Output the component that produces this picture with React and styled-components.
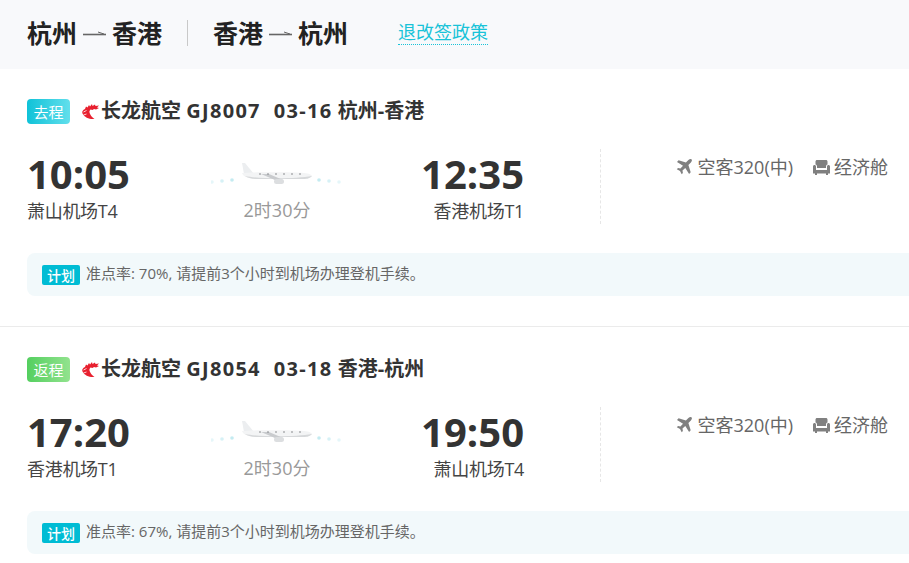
import React from "react";
import styled, { createGlobalStyle } from "styled-components";

const FONT = `"Open Sans", "Noto Sans CJK SC", sans-serif`;

const GlobalStyle = createGlobalStyle`
    html, body {
        margin: 0;
        padding: 0;
        background: #fff;
        overflow: hidden;
    }
    body {
        font-family: ${FONT};
        color: #333;
    }
`;

const Page = styled.div`
    width: 909px;
    height: 563px;
    overflow: hidden;
`;

const Header = styled.div`
    height: 69px;
    box-sizing: border-box;
    padding: 0 0 4px 27px;
    display: flex;
    align-items: center;
    background: #f8f9fb;
`;

const Route = styled.div`
    display: flex;
    align-items: center;
    gap: 6px;
    font-size: 25px;
    font-weight: 700;
    color: #222;
    line-height: 30px;
`;

const Divider = styled.span`
    width: 1px;
    height: 26px;
    margin: 0 25px;
    background: #c9c9c9;
`;

const PolicyLink = styled.a`
    margin-left: 50px;
    font-size: 18px;
    line-height: 24px;
    color: #19c3d8;
    border-bottom: 1px dotted #19c3d8;
`;

const Segment = styled.section`
    height: 258px;
    padding: 30px 0 0 27px;
    box-sizing: border-box;
    border-bottom: ${(props) => (props.last ? "none" : "1px solid #ebebeb")};
`;

const TitleRow = styled.div`
    display: flex;
    align-items: center;
    height: 25px;
`;

const Tag = styled.span`
    width: 43px;
    height: 25px;
    border-radius: 4px;
    display: flex;
    align-items: center;
    justify-content: center;
    font-size: 15px;
    color: #fff;
    background: ${(props) => props.bg};
`;

const FlightTitle = styled.span`
    font-size: 20px;
    font-weight: 700;
    line-height: 24px;
    color: #333;
    white-space: pre;
    padding-bottom: 2px;
`;

const Latin = styled.span`
    letter-spacing: 1.3px;
`;

const Logo = styled.svg`
    width: 20px;
    height: 18px;
    margin: 0 1px 0 10px;
    flex: none;
`;

const Times = styled.div`
    display: flex;
    margin-top: 25px;
    height: 75px;
`;

const Side = styled.div`
    width: ${(props) => props.w}px;
    display: flex;
    flex-direction: column;
    align-items: ${(props) => (props.right ? "flex-end" : "flex-start")};
`;

const Clock = styled.div`
    font-size: 40px;
    font-weight: 700;
    line-height: 50px;
    color: #333;
`;

const Airport = styled.div`
    font-size: 18px;
    line-height: 24px;
    color: #444;
    letter-spacing: -0.3px;
`;

const Middle = styled.div`
    width: 294px;
    display: flex;
    flex-direction: column;
    align-items: center;
    padding-top: 9px;
    box-sizing: border-box;
`;

const Plane = styled.svg`
    width: 132px;
    height: 28px;
`;

const Duration = styled.div`
    margin-top: 12px;
    font-size: 18px;
    line-height: 24px;
    color: #999;
`;

const Meta = styled.div`
    margin-left: 76px;
    width: 309px;
    box-sizing: border-box;
    padding: 5px 21px 0 0;
    border-left: 1px dashed #e6e6e6;
    display: flex;
    justify-content: flex-end;
    align-items: flex-start;
    gap: 20px;
`;

const MetaItem = styled.div`
    display: flex;
    align-items: center;
    gap: ${(props) => props.gap}px;
    font-size: 18px;
    line-height: 26px;
    color: #666;
`;

const Notice = styled.div`
    margin-top: 29px;
    height: 43px;
    padding-left: 15px;
    display: flex;
    align-items: center;
    gap: 6px;
    border-radius: 8px 0 0 8px;
    background: #f2f9fb;
`;

const PlanBadge = styled.span`
    width: 38px;
    height: 20px;
    border-radius: 2px;
    display: flex;
    align-items: center;
    justify-content: center;
    font-size: 14px;
    font-weight: 500;
    color: #fff;
    background: #00bcd4;
`;

const NoticeText = styled.span`
    font-size: 15px;
    line-height: 20px;
    color: #666;
    margin-bottom: 4px;
`;

const Arrow = () => (
    <svg width="23" height="10" viewBox="0 0 23 10">
        <path d="M0 6.500H23" fill="none" stroke="#666" strokeWidth="1.600" />
        <path d="M15 4l6 2" fill="none" stroke="#666" strokeWidth="1" />
    </svg>
);

const DragonLogo = () => (
    <Logo viewBox="0 0 20 18">
        <path
            d="M5 6l1-2.500 1.500 1L9 2l1 1.500L12 1l.5 2L15 1.500l.5 1.500L19 2.500 17 4.500l2 .5-3 1.500-2-.5-1.500 1-2-.5-1 1.500c-.5 2 1.500 5.500 5 8-5 .5-10-1.500-12-5.500C1.500 8.500 3 7 5 6z"
            fill="#e8202f"
        />
        <path d="M3.500 9l3-1.500M3.500 12l3-1" stroke="#fff" strokeWidth=".8" />
    </Logo>
);

const PlaneArt = () => (
    <Plane viewBox="0 0 132 28">
        {[[1, 24, 0.35], [11, 23, 0.55], [21, 22, 0.8], [108, 22, 0.8], [118, 23, 0.55], [128, 24, 0.35]].map(([x, y, o]) => (
            <circle key={x} cx={x} cy={y} r="1.8" fill="#b5e6ee" opacity={o} />
        ))}
        <path d="M31 5l3 0 9 11-10 0z" fill="#eceef0" />
        <path d="M31 15c10-1 52-1 62 0 5 .3 8 2 8 3s-4 3-10 3H47c-8 0-15-2-16-6z" fill="#f3f4f5" />
        <path d="M34 18c15 3 50 3 67 0-3 3-6 3-10 3H47c-6 0-10-1-13-3z" fill="#d6d8da" />
        <path d="M50 16l14 6h8l-14-6z" fill="#c9cbce" />
        <rect x="63" y="21" width="10" height="5" rx="2.500" fill="#dcdee0" />
        <path d="M48 16h48" stroke="#8a8c8f" strokeWidth="1" strokeDasharray="2 6" />
    </Plane>
);

const JetIcon = () => (
    <svg width="16" height="16" viewBox="0 0 16 16">
        <path
            d="M15.600.4c-.8-.7-2.200-.3-3.200.7L9.900 3.600 2.600 1.300 1 2.900l6 3.800-2.600 2.800-2.400-.4L.8 10.300l3.200 1.600 1.700 3.300 1.200-1.200-.4-2.500 2.800-2.600 3.800 6 1.600-1.600-2.300-7.300 2.500-2.500c1-1 1.400-2.400.7-3.100z"
            fill="#808080"
        />
    </svg>
);

const SeatIcon = () => (
    <svg width="17" height="15" viewBox="0 0 17 15">
        <path d="M2.500 1.500C2.500.7 3.200 0 4 0h9c.8 0 1.500.7 1.500 1.500V4.600c-1 .2-1.500 1-1.500 2V8H4V6.600c0-1-.5-1.800-1.500-2z" fill="#808080" />
        <path d="M0 6.500C0 5.700.7 5 1.500 5S3 5.700 3 6.500V10h11V6.500c0-.8.700-1.500 1.500-1.500S17 5.700 17 6.500V13.500h-2V15h-2v-1.500H4V15H2v-1.500H0z" fill="#808080" />
    </svg>
);

const flights = [
    {
        tag: "去程",
        bg: "linear-gradient(90deg, #0fc2d8, #62dfec)",
        airline: "长龙航空",
        code: "GJ8007",
        date: "03-16",
        route: "杭州-香港",
        depart: "10:05",
        from: "萧山机场T4",
        arrive: "12:35",
        to: "香港机场T1",
        notice: "准点率: 70%, 请提前3个小时到机场办理登机手续。",
    },
    {
        tag: "返程",
        bg: "linear-gradient(90deg, #54cf5f, #92e38e)",
        airline: "长龙航空",
        code: "GJ8054",
        date: "03-18",
        route: "香港-杭州",
        depart: "17:20",
        from: "香港机场T1",
        arrive: "19:50",
        to: "萧山机场T4",
        notice: "准点率: 67%, 请提前3个小时到机场办理登机手续。",
    },
];

const App = () => {
    return (
        <Page>
            <GlobalStyle />
            <Header>
                <Route>
                    杭州 <Arrow /> 香港
                </Route>
                <Divider />
                <Route>
                    香港 <Arrow /> 杭州
                </Route>
                <PolicyLink>退改签政策</PolicyLink>
            </Header>
            {flights.map((flight, index) => (
                <Segment key={flight.tag} last={index === flights.length - 1}>
                    <TitleRow>
                        <Tag bg={flight.bg}>{flight.tag}</Tag>
                        <DragonLogo />
                        <FlightTitle>
                            {flight.airline} <Latin>{flight.code}  {flight.date}</Latin> {flight.route}
                        </FlightTitle>
                    </TitleRow>
                    <Times>
                        <Side w={103}>
                            <Clock>{flight.depart}</Clock>
                            <Airport>{flight.from}</Airport>
                        </Side>
                        <Middle>
                            <PlaneArt />
                            <Duration>2时30分</Duration>
                        </Middle>
                        <Side w={100} right>
                            <Clock>{flight.arrive}</Clock>
                            <Airport>{flight.to}</Airport>
                        </Side>
                        <Meta>
                            <MetaItem gap={6}>
                                <JetIcon />
                                空客320(中)
                            </MetaItem>
                            <MetaItem gap={4}>
                                <SeatIcon />
                                经济舱
                            </MetaItem>
                        </Meta>
                    </Times>
                    <Notice>
                        <PlanBadge>计划</PlanBadge>
                        <NoticeText>{flight.notice}</NoticeText>
                    </Notice>
                </Segment>
            ))}
        </Page>
    );
};

export default App;
